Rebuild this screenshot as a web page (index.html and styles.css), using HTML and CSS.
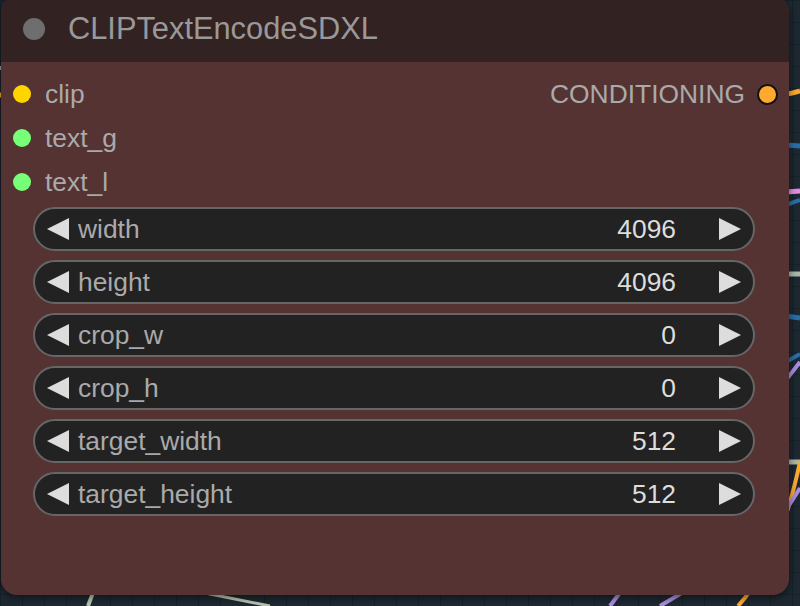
FILE: index.html
```html
<!DOCTYPE html>
<html>
<head>
<meta charset="UTF-8">
<title>CLIPTextEncodeSDXL</title>
<link rel="stylesheet" href="styles.css">
</head>
<body>

<div class="canvas">

	<!-- links behind the node -->
	<svg class="wires" width="800" height="606" viewBox="0 0 800 606">
		<path d="M786 94 C 792 94, 796 92, 800 91" stroke="#ffa931" stroke-width="5" fill="none"/>
		<path d="M0 95 L 4 95" stroke="#ffa931" stroke-width="5" fill="none"/>
		<path d="M0 68 L 4 68" stroke="#9aa59a" stroke-width="4" fill="none"/>
		<path d="M786 145 L 800 146" stroke="#2a6fa8" stroke-width="5" fill="none"/>
		<path d="M786 192 L 800 191" stroke="#e58ce5" stroke-width="5" fill="none"/>
		<path d="M786 205 L 800 200" stroke="#2a6fa8" stroke-width="4" fill="none"/>
		<path d="M786 274 L 800 274" stroke="#a9b8a8" stroke-width="5" fill="none"/>
		<path d="M786 316 L 800 318" stroke="#2a6fa8" stroke-width="5" fill="none"/>
		<path d="M786 362 L 800 354" stroke="#2a6fa8" stroke-width="4" fill="none"/>
		<path d="M786 380 L 800 362" stroke="#a98ee0" stroke-width="4" fill="none"/>
		<path d="M786 462 L 800 462" stroke="#a9b8a8" stroke-width="5" fill="none"/>
		<path d="M800 462 C 796 480, 780 560, 738 606" stroke="#ffa931" stroke-width="4" fill="none"/>
		<path d="M800 488 L 786 510" stroke="#a98ee0" stroke-width="4" fill="none"/>
		<path d="M622 590 L 610 606" stroke="#a98ee0" stroke-width="4" fill="none"/>
		<path d="M690 588 L 660 606" stroke="#a98ee0" stroke-width="4" fill="none"/>
		<path d="M94 590 L 88 606" stroke="#b7c4b0" stroke-width="4" fill="none"/>
		<path d="M200 592 L 270 606" stroke="#b7c4b0" stroke-width="3" fill="none"/>
	</svg>

	<div class="node">
		<div class="nodeTitle">
			<span class="titleDot"></span>
			<span class="titleText">CLIPTextEncodeSDXL</span>
		</div>

		<div class="nodeBody">
			<div class="slotRow">
				<div class="slotIn"><span class="slotDot clip"></span>clip</div>
				<div class="slotOut">CONDITIONING<span class="slotDot cond"></span></div>
			</div>
			<div class="slotRow">
				<div class="slotIn"><span class="slotDot text"></span>text_g</div>
			</div>
			<div class="slotRow">
				<div class="slotIn"><span class="slotDot text"></span>text_l</div>
			</div>

			<div class="widgets">
				<div class="numWidget">
					<svg class="arrow" width="22" height="22" viewBox="0 0 22 22"><polygon points="22,0 0,11 22,22"/></svg>
					<span class="wLabel">width</span>
					<span class="wValue">4096</span>
					<svg class="arrow" width="22" height="22" viewBox="0 0 22 22"><polygon points="0,0 22,11 0,22"/></svg>
				</div>
				<div class="numWidget">
					<svg class="arrow" width="22" height="22" viewBox="0 0 22 22"><polygon points="22,0 0,11 22,22"/></svg>
					<span class="wLabel">height</span>
					<span class="wValue">4096</span>
					<svg class="arrow" width="22" height="22" viewBox="0 0 22 22"><polygon points="0,0 22,11 0,22"/></svg>
				</div>
				<div class="numWidget">
					<svg class="arrow" width="22" height="22" viewBox="0 0 22 22"><polygon points="22,0 0,11 22,22"/></svg>
					<span class="wLabel">crop_w</span>
					<span class="wValue">0</span>
					<svg class="arrow" width="22" height="22" viewBox="0 0 22 22"><polygon points="0,0 22,11 0,22"/></svg>
				</div>
				<div class="numWidget">
					<svg class="arrow" width="22" height="22" viewBox="0 0 22 22"><polygon points="22,0 0,11 22,22"/></svg>
					<span class="wLabel">crop_h</span>
					<span class="wValue">0</span>
					<svg class="arrow" width="22" height="22" viewBox="0 0 22 22"><polygon points="0,0 22,11 0,22"/></svg>
				</div>
				<div class="numWidget">
					<svg class="arrow" width="22" height="22" viewBox="0 0 22 22"><polygon points="22,0 0,11 22,22"/></svg>
					<span class="wLabel">target_width</span>
					<span class="wValue">512</span>
					<svg class="arrow" width="22" height="22" viewBox="0 0 22 22"><polygon points="0,0 22,11 0,22"/></svg>
				</div>
				<div class="numWidget">
					<svg class="arrow" width="22" height="22" viewBox="0 0 22 22"><polygon points="22,0 0,11 22,22"/></svg>
					<span class="wLabel">target_height</span>
					<span class="wValue">512</span>
					<svg class="arrow" width="22" height="22" viewBox="0 0 22 22"><polygon points="0,0 22,11 0,22"/></svg>
				</div>
			</div>
		</div>
	</div>
</div>

</body>
</html>
```

FILE: styles.css
```css
/* base */
html, body {
	width: 100%;
	height: 100%;
	margin: 0;
	padding: 0;
	overflow: hidden;
}

body {
	font-family: "Liberation Sans", Arial, sans-serif;
	background-color: #1d2830;
}

/* graph canvas with grid */
.canvas {
	position: relative;
	width: 800px;
	height: 606px;
	overflow: hidden;
	background-color: #1d2830;
	background-image:
		linear-gradient(#17212a 1px, transparent 1px),
		linear-gradient(90deg, #17212a 1px, transparent 1px);
	background-size: 22px 22px;
}

.wires {
	position: absolute;
	top: 0;
	left: 0;
}

/* node box */
.node {
	position: relative;
	z-index: 1;
	width: 788px;
	height: 599px;
	margin: -4px 0 0 1px;
	background: #553333;
	border-radius: 16px;
	box-shadow: 0 2px 8px rgba(0, 0, 0, 0.55);
	overflow: hidden;
}

.nodeTitle {
	display: flex;
	align-items: center;
	height: 66px;
	padding-left: 22px;
	gap: 23px;
	background: #332222;
}

.titleDot {
	width: 22px;
	height: 22px;
	border-radius: 50%;
	background: #6e6e6e;
}

.titleText {
	color: #999999;
	font-size: 30.8px;
}

/* slots */
.nodeBody {
	padding-top: 10px;
}

.slotRow {
	display: flex;
	justify-content: space-between;
	align-items: center;
	height: 44px;
	color: #aaaaaa;
	font-size: 26.4px;
}

.slotIn {
	display: flex;
	align-items: center;
	gap: 14px;
	padding-left: 12px;
}

.slotOut {
	display: flex;
	align-items: center;
	gap: 12px;
	padding-right: 11px;
}

.slotDot {
	display: block;
	width: 18px;
	height: 18px;
	border-radius: 50%;
}

.slotDot.clip {
	background: #ffd500;
}

.slotDot.text {
	background: #77ff77;
}

.slotDot.cond {
	width: 17px;
	height: 17px;
	background: #ffa931;
	border: 2px solid #111111;
}

/* number widgets */
.widgets {
	display: flex;
	flex-direction: column;
	gap: 9px;
	margin: 3px 34px 0 32px;
}

.numWidget {
	display: flex;
	align-items: center;
	height: 44px;
	box-sizing: border-box;
	padding: 0 12px;
	background: #222222;
	border: 2px solid #666666;
	border-radius: 22px;
	font-size: 26.4px;
}

.numWidget .arrow {
	flex: none;
	fill: #dddddd;
}

.wLabel {
	margin-left: 9px;
	color: #aaaaaa;
}

.wValue {
	margin-left: auto;
	margin-right: 43px;
	color: #dddddd;
}
```
